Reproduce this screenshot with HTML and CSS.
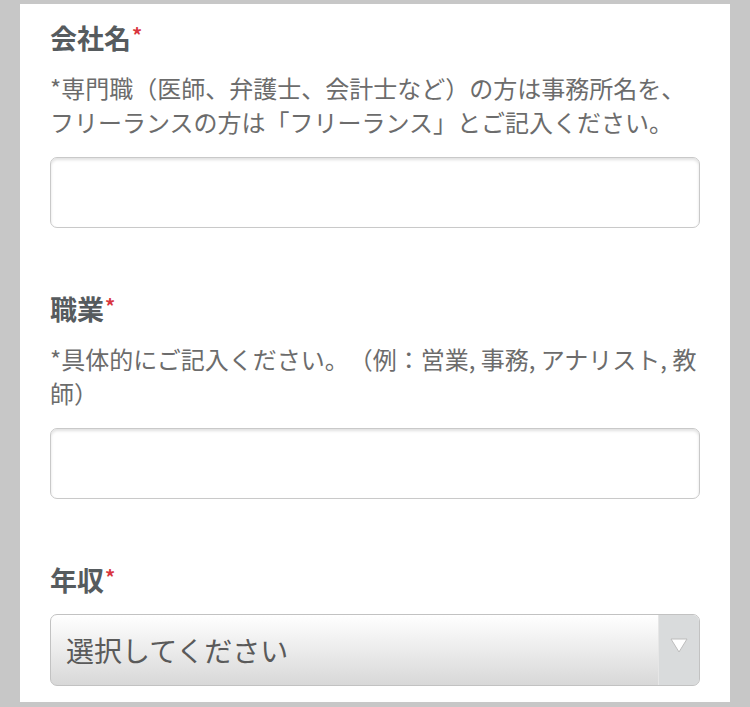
FILE: index.html
```html
<!DOCTYPE html>
<html lang="ja">
<head>
<meta charset="utf-8">
<title>フォーム</title>
<link rel="stylesheet" href="styles.css">
</head>
<body>
<div class="panel">
  <div class="field">
    <div class="label">会社名<span class="req">*</span></div>
    <p class="help">*専門職（医師、弁護士、会計士など）の方は事務所名を、<br>フリーランスの方は「フリーランス」とご記入ください。</p>
    <input class="text-input" type="text">
  </div>
  <div class="field">
    <div class="label">職業<span class="req">*</span></div>
    <p class="help">*具体的にご記入ください。（例：営業, 事務, アナリスト, 教師）</p>
    <input class="text-input" type="text">
  </div>
  <div class="field">
    <div class="label">年収<span class="req">*</span></div>
    <div class="select">
      <span class="select-text">選択してください</span>
      <span class="select-arrow">
        <svg width="18" height="15" viewBox="0 0 18 15"><polygon points="1,1 17,1 9,14" fill="#ffffff" stroke="#bdbdbd" stroke-width="1"/></svg>
      </span>
    </div>
  </div>
</div>
</body>
</html>
```
FILE: styles.css
```css
html, body {
  margin: 0;
  padding: 0;
}
body {
  background: #c7c7c7;
  font-family: "Noto Sans CJK JP", "Noto Sans", sans-serif;
  padding: 4px 20px 5px 20px;
}
.panel {
  background: #ffffff;
  padding: 16px 30px 16px 30px;
}
.field {
  margin-bottom: 63px;
}
.field:last-child {
  margin-bottom: 0;
}
.label {
  font-size: 27px;
  font-weight: bold;
  color: #565b5e;
  line-height: 36px;
  height: 36px;
}
.req {
  color: #d9363e;
  font-size: 20px;
  vertical-align: top;
  position: relative;
  top: -3px;
  margin-left: 1px;
}
.help {
  margin: 15px 0 18px 0;
  font-size: 24px;
  line-height: 34px;
  color: #6c6c6c;
  text-spacing-trim: space-all;
}
.text-input {
  display: block;
  box-sizing: border-box;
  width: 100%;
  height: 71px;
  margin: 0;
  border: 1px solid #c9c9c9;
  border-radius: 7px;
  background: #ffffff;
  box-shadow: inset 0 2px 3px rgba(0,0,0,0.12);
  outline: none;
}
.select {
  margin-top: 16px;
  box-sizing: border-box;
  height: 72px;
  border: 1px solid #c2c2c2;
  border-radius: 7px;
  background: linear-gradient(#ffffff, #d8d8d8);
  display: flex;
  align-items: center;
  overflow: hidden;
}
.select-text {
  flex: 1;
  padding-left: 15px;
  font-size: 28px;
  color: #5a5a5a;
}
.select-arrow {
  width: 41px;
  align-self: stretch;
  border-left: 1px solid #e6e6e6;
  background: #d9dbdc;
  display: flex;
  align-items: center;
  justify-content: center;
  padding-bottom: 10px;
  box-sizing: border-box;
}
.select-arrow svg {
  display: block;
}
```
